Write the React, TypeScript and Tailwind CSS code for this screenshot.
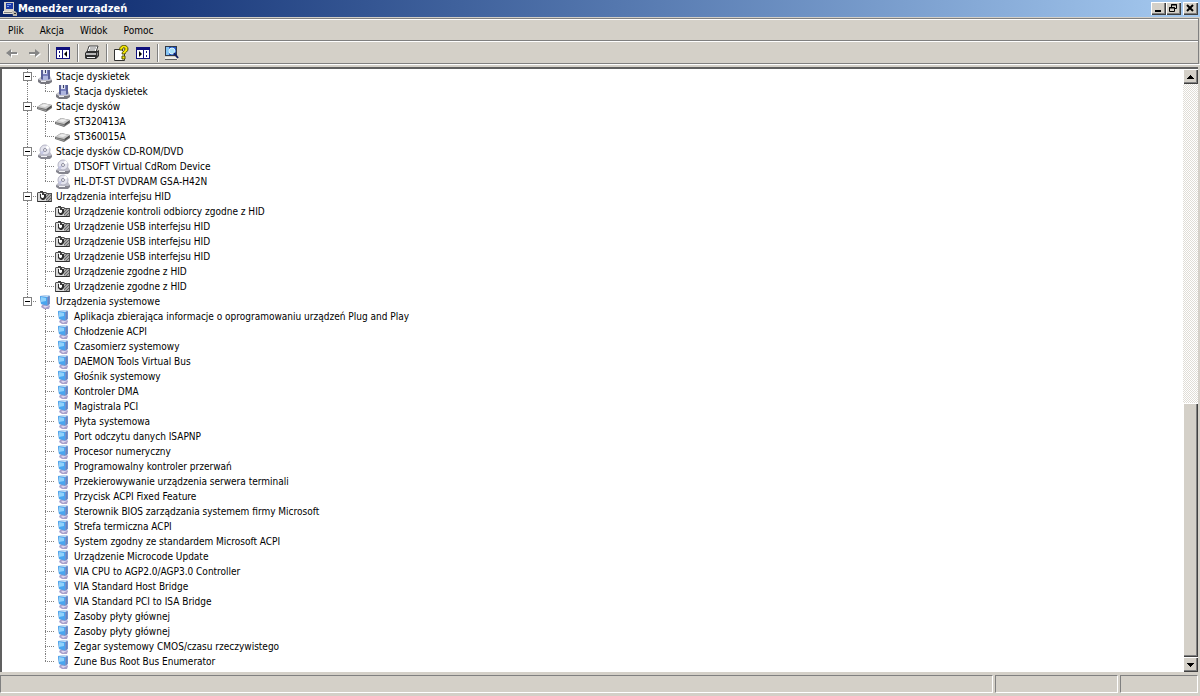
import { useState, FC, ReactNode } from 'react';

// --- Types ---
type DeviceKind = 'floppy' | 'disk' | 'cdrom' | 'hid' | 'system';

interface DeviceGroup {
  name: string;
  kind: DeviceKind;
  devices: string[];
}

// --- Data ---
const groups: DeviceGroup[] = [
  { name: 'Stacje dyskietek', kind: 'floppy', devices: ['Stacja dyskietek'] },
  { name: 'Stacje dysków', kind: 'disk', devices: ['ST320413A', 'ST360015A'] },
  {
    name: 'Stacje dysków CD-ROM/DVD',
    kind: 'cdrom',
    devices: ['DTSOFT Virtual CdRom Device', 'HL-DT-ST DVDRAM GSA-H42N'],
  },
  {
    name: 'Urządzenia interfejsu HID',
    kind: 'hid',
    devices: [
      'Urządzenie kontroli odbiorcy zgodne z HID',
      'Urządzenie USB interfejsu HID',
      'Urządzenie USB interfejsu HID',
      'Urządzenie USB interfejsu HID',
      'Urządzenie zgodne z HID',
      'Urządzenie zgodne z HID',
    ],
  },
  {
    name: 'Urządzenia systemowe',
    kind: 'system',
    devices: [
      'Aplikacja zbierająca informacje o oprogramowaniu urządzeń Plug and Play',
      'Chłodzenie ACPI',
      'Czasomierz systemowy',
      'DAEMON Tools Virtual Bus',
      'Głośnik systemowy',
      'Kontroler DMA',
      'Magistrala PCI',
      'Płyta systemowa',
      'Port odczytu danych ISAPNP',
      'Procesor numeryczny',
      'Programowalny kontroler przerwań',
      'Przekierowywanie urządzenia serwera terminali',
      'Przycisk ACPI Fixed Feature',
      'Sterownik BIOS zarządzania systemem firmy Microsoft',
      'Strefa termiczna ACPI',
      'System zgodny ze standardem Microsoft ACPI',
      'Urządzenie Microcode Update',
      'VIA CPU to AGP2.0/AGP3.0 Controller',
      'VIA Standard Host Bridge',
      'VIA Standard PCI to ISA Bridge',
      'Zasoby płyty głównej',
      'Zasoby płyty głównej',
      'Zegar systemowy CMOS/czasu rzeczywistego',
      'Zune Bus Root Bus Enumerator',
    ],
  },
];

const menus = ['Plik', 'Akcja', 'Widok', 'Pomoc'];

const raised =
  'bg-[#d4d0c8] shadow-[inset_1px_1px_#ffffff,inset_-1px_-1px_#404040,inset_-2px_-2px_#808080]';
const sunken = 'border border-t-[#808080] border-l-[#808080] border-r-white border-b-white';
const etched = 'border-t border-t-white border-b border-b-[#808080]';

// --- Device icons ---
const deviceIcons: Record<DeviceKind, ReactNode> = {
  floppy: (
    <>
      <path d="M1 10l4-3h8l2 4-3 3H4z" fill="#c4c4cc" />
      <path d="M1 10l3 2h8l3-1v2l-3 2H4l-3-2z" fill="#77777f" />
      <path d="M4 1h9v9l-2 1H5l-1-1z" fill="#7b82c0" />
      <path d="M4 1h2v9H4zM11 1h2v9h-2z" fill="#5a6198" />
      <path d="M6 1h4v4H6z" fill="#dfe2f2" />
      <path d="M8 1h1v3H8z" fill="#3b3f60" />
      <path d="M6 7h5v4H6z" fill="#aeb5df" />
      <path d="M4 12h5v1H4z" fill="#ececf2" />
    </>
  ),
  disk: (
    <>
      <path d="M0 8l6-4 9 2v3l-6 4-9-3z" fill="#6e6e6e" />
      <path d="M0 8l6-4 9 2-6 4z" fill="#c9c9c9" />
      <path d="M3 7l4-2 5 1-4 2z" fill="#ededed" />
      <path d="M1 9l8 2v1L1 10z" fill="#9b9b9b" />
      <path d="M10 10l4-3v1l-4 3z" fill="#404040" />
    </>
  ),
  cdrom: (
    <>
      <path d="M1 11l3-3h9l2 3-2 3H4z" fill="#bdbdc8" />
      <path d="M1 11l3 1h9l2-1v2l-2 2H4l-3-2z" fill="#85858f" />
      <circle cx="8" cy="6" r="5" fill="#e4e4ee" stroke="#b4b4c4" />
      <path d="M8 6l2-5 3 3z" fill="#ffffff" />
      <path d="M8 6l-5 2 2 3z" fill="#c4c6e2" />
      <circle cx="8" cy="6" r="1.5" fill="#ffffff" stroke="#8a8a9c" />
      <path d="M4 12h6v1H4z" fill="#f2f2f6" />
    </>
  ),
  hid: (
    <>
      <path d="M0 4l1-1h8l1 1h5v9H0z" fill="#505050" />
      <path d="M1 4h8v8H1z" fill="#dadada" />
      <path d="M9 5h5v7H9z" fill="#a8a8a8" />
      <path d="M9 8l3-3M9 11l5-5M11 12l3-3" stroke="#686868" />
      <path d="M3 5h6v4l-2 2H5L3 9z" fill="#303030" />
      <path d="M4 4h3v4L6 9H5L4 8z" fill="#ffffff" />
      <path d="M3 2h3v1h1v3H5V3H3z" fill="#404040" />
      <path d="M1 12h13v1H1z" fill="#303030" />
    </>
  ),
  system: (
    <>
      <path d="M5 11l6-1 2 2-1 3H7l-3-2z" fill="#a79fca" />
      <path d="M6 12l5-1 1 1-4 2z" fill="#dcd5ee" />
      <path d="M3 2l8-1 2 1v8l-3 2-6-2z" fill="#6f94d0" />
      <path d="M3 2l7 1v8l-6-1z" fill="#49a5ef" />
      <path d="M4 3l5 1v3L4 8z" fill="#8fd2fb" />
      <path d="M3 2l8-1 2 1-3 1z" fill="#c3dff7" />
      <path d="M11 3l1-1v8l-1 1z" fill="#6c82bc" />
    </>
  ),
};

const DeviceIcon: FC<{ kind: DeviceKind }> = ({ kind }) => (
  <span className="w-[18px] shrink-0">
    <svg viewBox="0 0 16 15" className="h-[15px] w-4" aria-hidden="true">
      {deviceIcons[kind]}
    </svg>
  </span>
);

// Dotted connector drawn next to a tree row
const Branch: FC<{ up?: boolean; down?: boolean; right?: boolean }> = ({ up, down, right }) => (
  <svg viewBox="0 0 18 15" className="h-[15px] w-[18px] shrink-0" aria-hidden="true">
    <g stroke="#808080" strokeDasharray="1 1">
      {up && <path d="M8.5 0v8" />}
      {down && <path d="M8.5 8v7" />}
      {right && <path d="M8 7.5h10" />}
    </g>
  </svg>
);

// --- Tree ---
const TreeGroup: FC<{ group: DeviceGroup; last: boolean }> = ({ group, last }) => {
  const [open, setOpen] = useState(true);

  return (
    <li role="treeitem" aria-expanded={open}>
      <div className="flex h-[15px] items-center">
        <div className="relative flex shrink-0">
          <Branch up down={!last} right />
          <button
            type="button"
            aria-label={group.name}
            onClick={() => setOpen(!open)}
            className="absolute top-[3px] left-1 flex size-[9px] items-center justify-center border border-[#808080] bg-white"
          >
            <svg viewBox="0 0 5 5" className="size-[5px]" aria-hidden="true">
              <path d={open ? 'M0 2h5v1H0z' : 'M0 2h5v1H0zM2 0h1v5H2z'} fill="#000000" />
            </svg>
          </button>
        </div>
        <DeviceIcon kind={group.kind} />
        <span className="pl-px whitespace-nowrap">{group.name}</span>
      </div>
      {open && (
        <ul role="group">
          {group.devices.map((device, i) => (
            <li key={i} role="treeitem" className="flex h-[15px] items-center">
              <Branch up={!last} down={!last} />
              <Branch up down={i < group.devices.length - 1} right />
              <DeviceIcon kind={group.kind} />
              <span className="pl-px whitespace-nowrap">{device}</span>
            </li>
          ))}
        </ul>
      )}
    </li>
  );
};

// --- Title bar ---
const WindowButton: FC<{ label: string; children: ReactNode }> = ({ label, children }) => (
  <button type="button" aria-label={label} className={`flex h-[13px] w-[15px] items-center justify-center ${raised}`}>
    <svg viewBox="0 0 11 9" className="h-[9px] w-[11px]" fill="none" stroke="#000000" aria-hidden="true">
      {children}
    </svg>
  </button>
);

const ComputerIcon: FC = () => (
  <svg viewBox="0 0 16 16" className="size-4 shrink-0" aria-hidden="true">
    <path d="M2 1h10v9H2z" fill="#d4d0c8" />
    <path d="M4 2h7v6H4z" fill="#1c3aa8" />
    <path d="M5 3h4v1H5zM5 5h2v1H5z" fill="#7fa4ee" />
    <path d="M1 10h11l1 3H1z" fill="#e4e0d8" />
    <path d="M2 11h8v1H2z" fill="#808080" />
    <path d="M10 10h3l2 2v3h-4z" fill="#b9b5ac" />
    <path d="M12 12h2v1h-2z" fill="#303030" />
  </svg>
);

const TitleBar: FC = () => (
  <header className="flex h-[17px] shrink-0 items-center bg-linear-to-r from-[#0a246a] to-[#a6caf0] px-[2px]">
    <ComputerIcon />
    <h1 className="grow text-[11px] font-bold text-white">Menedżer urządzeń</h1>
    <div className="flex">
      <WindowButton label="Minimalizuj">
        <path d="M2 7h6" strokeWidth="2" />
      </WindowButton>
      <WindowButton label="Przywróć w dół">
        <path d="M3.5 3V.5h5v4H7M3 1h6M1.5 3.5h5v4h-5zM1 4h6" />
      </WindowButton>
      <span className="w-[2px]" />
      <WindowButton label="Zamknij">
        <path d="M2 1l6 6M8 1L2 7" strokeWidth="2" />
      </WindowButton>
    </div>
  </header>
);

// --- Toolbar ---
const ToolButton: FC<{ label: string; disabled?: boolean; children: ReactNode }> = ({ label, disabled, children }) => (
  <button type="button" aria-label={label} disabled={disabled} className="flex h-5 w-[22px] items-center justify-center">
    <svg viewBox="0 0 16 16" className="size-4" aria-hidden="true">
      {children}
    </svg>
  </button>
);

const Separator: FC = () => (
  <span className="mr-[2px] ml-[3px] h-[18px] w-[2px] border-r border-l border-r-white border-l-[#808080]" />
);

const Toolbar: FC = () => (
  <div role="toolbar" className={`flex h-[23px] items-center pl-px ${etched}`}>
    <ToolButton label="Wstecz" disabled>
      <path d="M3 9l5-4v3h6v2H8v3z" fill="#ffffff" />
      <path d="M2 8l5-4v3h6v2H7v3z" fill="#868686" />
    </ToolButton>
    <ToolButton label="Dalej" disabled>
      <path d="M15 9l-5-4v3H4v2h6v3z" fill="#ffffff" />
      <path d="M14 8L9 4v3H3v2h6v3z" fill="#868686" />
    </ToolButton>
    <Separator />
    <ToolButton label="Pokaż/Ukryj drzewo konsoli">
      <path d="M1 2h14v12H1z" fill="#10107c" />
      <path d="M2 5h5v8H2zM8 5h6v8H8z" fill="#ffffff" />
      <path d="M4 6h1v2H4zM4 10h1v2H4z" fill="#10107c" />
      <path d="M9 9l3-3v6z" fill="#000000" />
    </ToolButton>
    <Separator />
    <ToolButton label="Drukuj">
      <path d="M5 1h9l-2 6H3z" fill="#ffffff" stroke="#404040" />
      <path d="M6 3h6M5 5h6" stroke="#808080" />
      <path d="M1 8l2-2h10l2-1v6l-3 3H2l-1-1z" fill="#303030" />
      <path d="M2 8h10v2H2z" fill="#b8b8b8" />
      <path d="M3 12h8v1H3z" fill="#f0f0f0" />
      <path d="M13 8l1-1v3l-1 1z" fill="#909090" />
    </ToolButton>
    <Separator />
    <ToolButton label="Pomoc">
      <path d="M1.5 4.5h7l3 3v8h-10z" fill="#ffffff" stroke="#303030" />
      <path d="M6.5 5c0-6 8.5-6 8.5-1 0 3-3 3-3 5H9c0-3 3-3 3-5 0-2-2.5-2-2.5 1z" fill="#f8e800" stroke="#505000" />
      <path d="M9 11h3v3H9z" fill="#f8e800" stroke="#505000" />
    </ToolButton>
    <ToolButton label="Pokaż/Ukryj okienko akcji">
      <path d="M1 2h14v12H1z" fill="#10107c" />
      <path d="M2 5h6v8H2zM9 5h5v8H9z" fill="#ffffff" />
      <path d="M11 6h1v2h-1zM11 10h1v2h-1z" fill="#10107c" />
      <path d="M7 9L4 6v6z" fill="#000000" />
    </ToolButton>
    <Separator />
    <ToolButton label="Skanuj w poszukiwaniu zmian sprzętu">
      <path d="M1 1h12v10H1z" fill="#303848" />
      <path d="M2 2h10v8H2z" fill="#1f58c8" />
      <path d="M2 2h3v8H2z" fill="#85c4f4" />
      <path d="M1 12h12l1 3H1z" fill="#f0eee8" />
      <path d="M1 14h12v1H1z" fill="#606060" />
      <circle cx="8" cy="6" r="3" fill="#a8e0f8" stroke="#dff4fc" />
      <path d="M10 8l4 5" stroke="#102060" strokeWidth="2" />
    </ToolButton>
  </div>
);

// --- Scroll bar ---
const ScrollBar: FC = () => (
  <div className="flex w-[15px] shrink-0 flex-col bg-[repeating-conic-gradient(#ffffff_0_25%,#e0ddd6_0_50%)] bg-[length:2px_2px]">
    <button type="button" aria-label="W górę" className={`flex h-[15px] items-center justify-center ${raised}`}>
      <svg viewBox="0 0 7 4" className="h-1 w-[7px]" aria-hidden="true">
        <path d="M3 0h1v1h1v1h1v1h1v1H0V3h1V2h1V1h1z" />
      </svg>
    </button>
    <div className="grow-[318] basis-0" />
    <div className={`grow-[254] basis-0 ${raised}`} />
    <button type="button" aria-label="W dół" className={`flex h-[15px] items-center justify-center ${raised}`}>
      <svg viewBox="0 0 7 4" className="h-1 w-[7px]" aria-hidden="true">
        <path d="M0 0h7v1H6v1H5v1H4v1H3V3H2V2H1V1H0z" />
      </svg>
    </button>
  </div>
);

// --- Main Component ---
const App: FC = () => (
  <div className="flex h-screen flex-col overflow-hidden bg-[#d4d0c8] font-['Tahoma','DejaVu_Sans_Condensed','DejaVu_Sans',sans-serif] text-[10px] leading-[15px] text-black">
    <TitleBar />
    <div className="mt-px mr-px border-t border-r border-[#808080]">
      <nav className={`flex h-[22px] items-center ${etched}`}>
        {menus.map((menu) => (
          <button key={menu} type="button" className="px-2">
            {menu}
          </button>
        ))}
      </nav>
      <Toolbar />
    </div>
    <div className="h-[3px] shrink-0 border-t border-white" />
    <main className="mr-[2px] flex min-h-0 grow border-t-2 border-l-2 border-[#606060] bg-white">
      <ul role="tree" className="min-w-0 grow overflow-hidden pl-[17px]">
        {groups.map((group, i) => (
          <TreeGroup key={group.name} group={group} last={i === groups.length - 1} />
        ))}
      </ul>
      <ScrollBar />
    </main>
    <footer className="mt-[3px] mb-[3px] flex h-[18px] shrink-0 gap-[2px] pr-[2px]">
      <div className={`grow ${sunken}`} />
      <div className={`w-[123px] ${sunken}`} />
      <div className={`w-[78px] ${sunken}`} />
    </footer>
  </div>
);

export default App;
